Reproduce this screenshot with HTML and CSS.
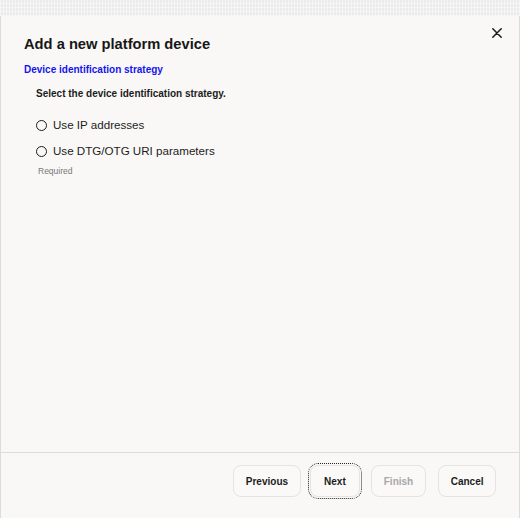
FILE: index.html
```html
<!DOCTYPE html>
<html>
<head>
<meta charset="utf-8">
<link rel="stylesheet" href="styles.css">
</head>
<body>
<div class="strip"></div>
<div class="dialog">
  <div class="body">
    <div class="head">
      <h1 class="title">Add a new platform device</h1>
      <button class="close" aria-label="Close">
        <svg width="10" height="10" viewBox="0 0 10 10"><path d="M0.8 0.8L9.2 9.2M9.2 0.8L0.8 9.2" stroke="#1a1a1a" stroke-width="1.5" stroke-linecap="round"/></svg>
      </button>
    </div>
    <div class="step">Device identification strategy</div>
    <div class="group">
      <div class="prompt">Select the device identification strategy.</div>
      <div class="options">
        <label class="radio"><span class="dot"></span><span>Use IP addresses</span></label>
        <label class="radio"><span class="dot"></span><span>Use DTG/OTG URI parameters</span></label>
      </div>
      <div class="hint">Required</div>
    </div>
  </div>
  <div class="footer">
    <button class="btn prev">Previous</button>
    <button class="btn next focus">Next</button>
    <button class="btn finish disabled">Finish</button>
    <button class="btn cancel">Cancel</button>
  </div>
</div>
</body>
</html>
```
FILE: styles.css
```css
html, body {
  margin: 0;
  padding: 0;
}
body {
  font-family: "Liberation Sans", Arial, sans-serif;
  color: #1a1a1a;
  background: #f9f8f6;
  display: flex;
  flex-direction: column;
  width: 520px;
  height: 518px;
  overflow: hidden;
}
.strip {
  height: 16px;
  flex: none;
  background-color: #ebebeb;
  background-image:
    repeating-linear-gradient(90deg, rgba(255,255,255,0.55) 0 1px, transparent 1px 3px),
    repeating-linear-gradient(0deg, rgba(255,255,255,0.4) 0 1px, transparent 1px 4px);
}
.dialog {
  flex: 1;
  display: flex;
  flex-direction: column;
  background: #f9f8f6;
  border-left: 1px solid #dcdcdc;
  border-right: 1px solid #dcdcdc;
}
.body {
  flex: 1;
  padding: 0 17px 0 23px;
}
.head {
  display: flex;
  justify-content: space-between;
  align-items: flex-start;
  margin-top: 12px;
}
.title {
  margin: 6px 0 0 0;
  font-size: 14.7px;
  font-weight: bold;
  line-height: 20px;
  color: #171717;
}
.close {
  border: none;
  background: none;
  padding: 0;
  width: 10px;
  height: 10px;
  display: flex;
  cursor: pointer;
}
.step {
  margin-top: 9px;
  font-size: 10px;
  font-weight: bold;
  color: #1414ee;
  line-height: 14px;
}
.group {
  padding-left: 12px;
  margin-top: 10px;
}
.prompt {
  font-size: 10px;
  font-weight: bold;
  line-height: 14px;
  color: #1c1c1c;
}
.options {
  margin-top: 11px;
  display: flex;
  flex-direction: column;
}
.radio {
  display: flex;
  align-items: center;
  gap: 6px;
  font-size: 11.6px;
  line-height: 16px;
  color: #1c1c1c;
  height: 26px;
}
.dot {
  width: 9px;
  height: 9px;
  border: 1.2px solid #1c1c1c;
  border-radius: 50%;
  flex: none;
}
.hint {
  margin-top: 1px;
  margin-left: 2px;
  font-size: 8.5px;
  color: #777;
  line-height: 12px;
}
.footer {
  flex: none;
  box-sizing: border-box;
  height: 66px;
  border-top: 1px solid #dddcda;
  display: flex;
  justify-content: flex-end;
  align-items: center;
  padding: 0 23px 9px 0;
}
.btn {
  font-family: "Liberation Sans", Arial, sans-serif;
  font-size: 10px;
  font-weight: bold;
  color: #1c1c1c;
  background: #faf9f7;
  border: 1px solid #e4e3e0;
  border-radius: 8px;
  height: 32px;
  padding: 0 12px;
}
.prev { margin-right: 9px; }
.next { margin-right: 11px; padding: 0 13px; }
.finish { margin-right: 12px; }
.cancel { padding: 0 11.5px; }
.btn.focus {
  outline: 1px dotted #222;
  outline-offset: 1px;
}
.btn.disabled {
  color: #a8a8a8;
}
```
